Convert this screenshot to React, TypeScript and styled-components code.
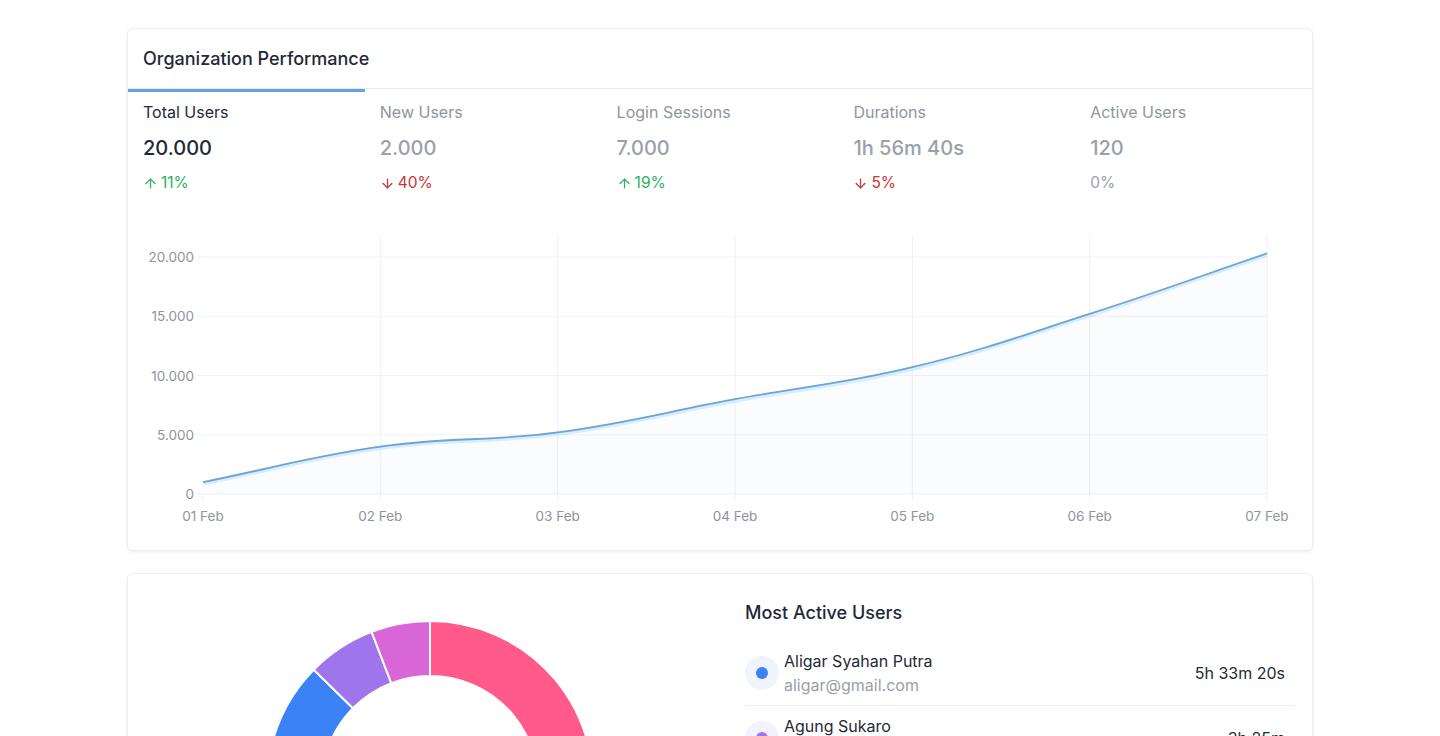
import React from "react";
import styled, { createGlobalStyle } from "styled-components";
import { ArrowUp, ArrowDown } from "lucide-react";

const GlobalStyle = createGlobalStyle`
  *, *::before, *::after { box-sizing: border-box; }
  html, body { margin: 0; padding: 0; background: #ffffff; }
  body {
    font-family: Inter, "Noto Sans", "Liberation Sans", sans-serif;
    color: #1f2937;
    -webkit-font-smoothing: antialiased;
  }
`;

const Page = styled.main`
  width: 1186px;
  margin: 0 auto;
  padding: 28px 0 40px;
  display: flex;
  flex-direction: column;
  gap: 22px;
`;

const Card = styled.section`
  background: #fff;
  border: 1px solid #eceef2;
  border-radius: 6px;
  box-shadow: 0 1px 3px rgba(17, 24, 39, 0.08);
  overflow: hidden;
`;

const CardHeader = styled.header`
  height: 60px;
  display: flex;
  align-items: center;
  padding: 1px 15px 0;
  border-bottom: 1px solid #e8eaee;
`;

const Title = styled.h2`
  margin: 0;
  font-size: 18px;
  line-height: 24px;
  font-weight: 500;
  color: #1f2937;
`;

const Tabs = styled.div`
  display: grid;
  grid-template-columns: repeat(5, 1fr);
`;

const Tab = styled.div<{ $active?: boolean }>`
  padding: 10px 15px 22px;
  border-top: 3px solid ${(p) => (p.$active ? "#65a0e2" : "transparent")};
  display: flex;
  flex-direction: column;
`;

const TabLabel = styled.div<{ $active?: boolean }>`
  font-size: 16px;
  line-height: 20px;
  color: ${(p) => (p.$active ? "#1f2937" : "#8f95a0")};
`;

const TabValue = styled.div<{ $active?: boolean }>`
  margin-top: 12px;
  font-size: 20px;
  line-height: 28px;
  font-weight: 500;
  color: ${(p) => (p.$active ? "#1f2937" : "#9aa0aa")};
`;

const Change = styled.div<{ $trend: "up" | "down" | "flat" }>`
  margin-top: 11px;
  display: inline-flex;
  align-items: center;
  gap: 3px;
  font-size: 15.5px;
  line-height: 20px;
  color: ${(p) =>
    p.$trend === "up" ? "#28b45a" : p.$trend === "down" ? "#c93434" : "#9aa0aa"};
`;

const ChartWrap = styled.div`
  padding-bottom: 15px;
  svg { display: block; }
`;

const AxisText = styled.text`
  font-family: Inter, "Noto Sans", sans-serif;
  font-size: 13.5px;
  fill: #8e93a0;
`;

const Split = styled.div`
  display: grid;
  grid-template-columns: 604px 1fr;
`;

const DonutCol = styled.div`
  svg { display: block; }
`;

const UsersCol = styled.div`
  padding: 27px 17px 0 13px;
`;

const List = styled.ul`
  list-style: none;
  margin: 16px 0 0;
  padding: 0;
`;

const Row = styled.li`
  display: flex;
  align-items: center;
  padding: 9px 10px 9px 0;
  border-bottom: 1px solid #eef0f3;
  &:last-child { border-bottom: none; }
`;

const Avatar = styled.div<{ $color: string; $bg: string }>`
  width: 34px;
  height: 34px;
  border-radius: 50%;
  background: ${(p) => p.$bg};
  display: flex;
  align-items: center;
  justify-content: center;
  margin-right: 5px;
  flex-shrink: 0;
  &::after {
    content: "";
    width: 12px;
    height: 12px;
    border-radius: 50%;
    background: ${(p) => p.$color};
  }
`;

const Info = styled.div`
  display: flex;
  flex-direction: column;
  gap: 2px;
`;

const Name = styled.div`
  font-size: 16px;
  line-height: 22px;
  color: #1f2937;
`;

const Email = styled.div`
  font-size: 16px;
  line-height: 22px;
  color: #9aa0aa;
`;

const Time = styled.div`
  margin-left: auto;
  font-size: 16px;
  line-height: 22px;
  color: #1f2937;
`;

type Stat = {
  label: string;
  value: string;
  change: string;
  trend: "up" | "down" | "flat";
};

const stats: Stat[] = [
  { label: "Total Users", value: "20.000", change: "11%", trend: "up" },
  { label: "New Users", value: "2.000", change: "40%", trend: "down" },
  { label: "Login Sessions", value: "7.000", change: "19%", trend: "up" },
  { label: "Durations", value: "1h 56m 40s", change: "5%", trend: "down" },
  { label: "Active Users", value: "120", change: "0%", trend: "flat" },
];

const days = ["01 Feb", "02 Feb", "03 Feb", "04 Feb", "05 Feb", "06 Feb", "07 Feb"];
const values = [1000, 4000, 5200, 8000, 10700, 15200, 20300];

const X0 = 203;
const X1 = 1267;
const Y0 = 494;
const PER = 59.25 / 5000;
const DX = (X1 - X0) / (days.length - 1);

type Pt = { x: number; y: number };

function smoothPath(p: Pt[]) {
  const t = 0.4;
  const cps = p.map((cur, i) => {
    const prev = p[i - 1] || cur;
    const next = p[i + 1] || cur;
    const d01 = Math.hypot(cur.x - prev.x, cur.y - prev.y);
    const d12 = Math.hypot(next.x - cur.x, next.y - cur.y);
    let s01 = d01 / (d01 + d12);
    let s12 = d12 / (d01 + d12);
    if (!isFinite(s01)) s01 = 0;
    if (!isFinite(s12)) s12 = 0;
    const fa = t * s01;
    const fb = t * s12;
    return {
      prev: { x: cur.x - fa * (next.x - prev.x), y: cur.y - fa * (next.y - prev.y) },
      next: { x: cur.x + fb * (next.x - prev.x), y: cur.y + fb * (next.y - prev.y) },
    };
  });
  let d = `M${p[0].x},${p[0].y}`;
  for (let i = 1; i < p.length; i++) {
    const a = cps[i - 1].next;
    const b = cps[i].prev;
    d += ` C${a.x.toFixed(2)},${a.y.toFixed(2)} ${b.x.toFixed(2)},${b.y.toFixed(2)} ${p[i].x},${p[i].y.toFixed(2)}`;
  }
  return d;
}

const LineChart: React.FC = () => {
  const pts = values.map((v, i) => ({ x: X0 + i * DX, y: Y0 - v * PER }));
  const line = smoothPath(pts);
  const area = `${line} L${X1},${Y0} L${X0},${Y0} Z`;
  const yTicks = [0, 5000, 10000, 15000, 20000];
  const fmt = (v: number) => (v === 0 ? "0" : `${v / 1000}.000`);
  return (
    <svg width={1184} height={320} viewBox="128 215 1184 320">
      {yTicks.map((v) => {
        const y = Y0 - v * PER;
        return (
          <g key={v}>
            <line x1={197} x2={X1} y1={y} y2={y} stroke="#f0f2f5" strokeWidth={1} />
            <AxisText x={194} y={y} textAnchor="end" dominantBaseline="central">
              {fmt(v)}
            </AxisText>
          </g>
        );
      })}
      {days.map((d, i) => {
        const x = X0 + i * DX;
        return (
          <g key={d}>
            <line x1={x} x2={x} y1={i === 0 ? Y0 : 235} y2={Y0 + 7} stroke="#eef0f4" strokeWidth={1} />
            <AxisText x={x} y={516} textAnchor="middle" dominantBaseline="central">
              {d}
            </AxisText>
          </g>
        );
      })}
      <path d={area} fill="rgba(120,180,230,0.035)" />
      <path d={line} fill="none" stroke="rgba(180,225,250,0.5)" strokeWidth={4} transform="translate(0,1.5)" />
      <path d={line} fill="none" stroke="#6ea2d8" strokeWidth={1.8} />
    </svg>
  );
};

function arcPath(cx: number, cy: number, R: number, r: number, a0: number, a1: number) {
  const rad = (a: number) => ((a - 90) * Math.PI) / 180;
  const p = (rr: number, a: number) => [cx + rr * Math.cos(rad(a)), cy + rr * Math.sin(rad(a))];
  const large = a1 - a0 > 180 ? 1 : 0;
  const [x0, y0] = p(R, a0);
  const [x1, y1] = p(R, a1);
  const [x2, y2] = p(r, a1);
  const [x3, y3] = p(r, a0);
  return `M${x0},${y0} A${R},${R} 0 ${large} 1 ${x1},${y1} L${x2},${y2} A${r},${r} 0 ${large} 0 ${x3},${y3} Z`;
}

const segments = [
  { from: 0, to: 200, color: "#ff5a8a" },
  { from: 200, to: 250, color: "#f59e0b" },
  { from: 250, to: 314.5, color: "#3b82f6" },
  { from: 314.5, to: 339, color: "#9f75ec" },
  { from: 339, to: 360, color: "#d866d6" },
];

const Donut: React.FC = () => (
  <svg width={604} height={420} viewBox="0 0 604 420">
    {segments.map((s) => (
      <path
        key={s.from}
        d={arcPath(302, 210, 163, 108, s.from, s.to)}
        fill={s.color}
        stroke="#ffffff"
        strokeWidth={2}
        strokeLinejoin="round"
      />
    ))}
  </svg>
);

const users = [
  { name: "Aligar Syahan Putra", email: "aligar@gmail.com", time: "5h 33m 20s", color: "#3b82f6", bg: "#f0f5fd" },
  { name: "Agung Sukaro", email: "agung@gmail.com", time: "3h 25m", color: "#9f75ec", bg: "#f5f1fd" },
  { name: "Budi Santoso", email: "budi@gmail.com", time: "2h 10m", color: "#d866d6", bg: "#fbf0fb" },
];

export default function App() {
  return (
    <>
      <GlobalStyle />
      <Page>
        <Card>
          <CardHeader>
            <Title>Organization Performance</Title>
          </CardHeader>
          <Tabs>
            {stats.map((s, i) => (
              <Tab key={s.label} $active={i === 0}>
                <TabLabel $active={i === 0}>{s.label}</TabLabel>
                <TabValue $active={i === 0}>{s.value}</TabValue>
                <Change $trend={s.trend}>
                  {s.trend === "up" && <ArrowUp size={15} strokeWidth={2} />}
                  {s.trend === "down" && <ArrowDown size={15} strokeWidth={2} />}
                  <span>{s.change}</span>
                </Change>
              </Tab>
            ))}
          </Tabs>
          <ChartWrap>
            <LineChart />
          </ChartWrap>
        </Card>
        <Card>
          <Split>
            <DonutCol>
              <Donut />
            </DonutCol>
            <UsersCol>
              <Title>Most Active Users</Title>
              <List>
                {users.map((u) => (
                  <Row key={u.name}>
                    <Avatar $color={u.color} $bg={u.bg} />
                    <Info>
                      <Name>{u.name}</Name>
                      <Email>{u.email}</Email>
                    </Info>
                    <Time>{u.time}</Time>
                  </Row>
                ))}
              </List>
            </UsersCol>
          </Split>
        </Card>
      </Page>
    </>
  );
}
